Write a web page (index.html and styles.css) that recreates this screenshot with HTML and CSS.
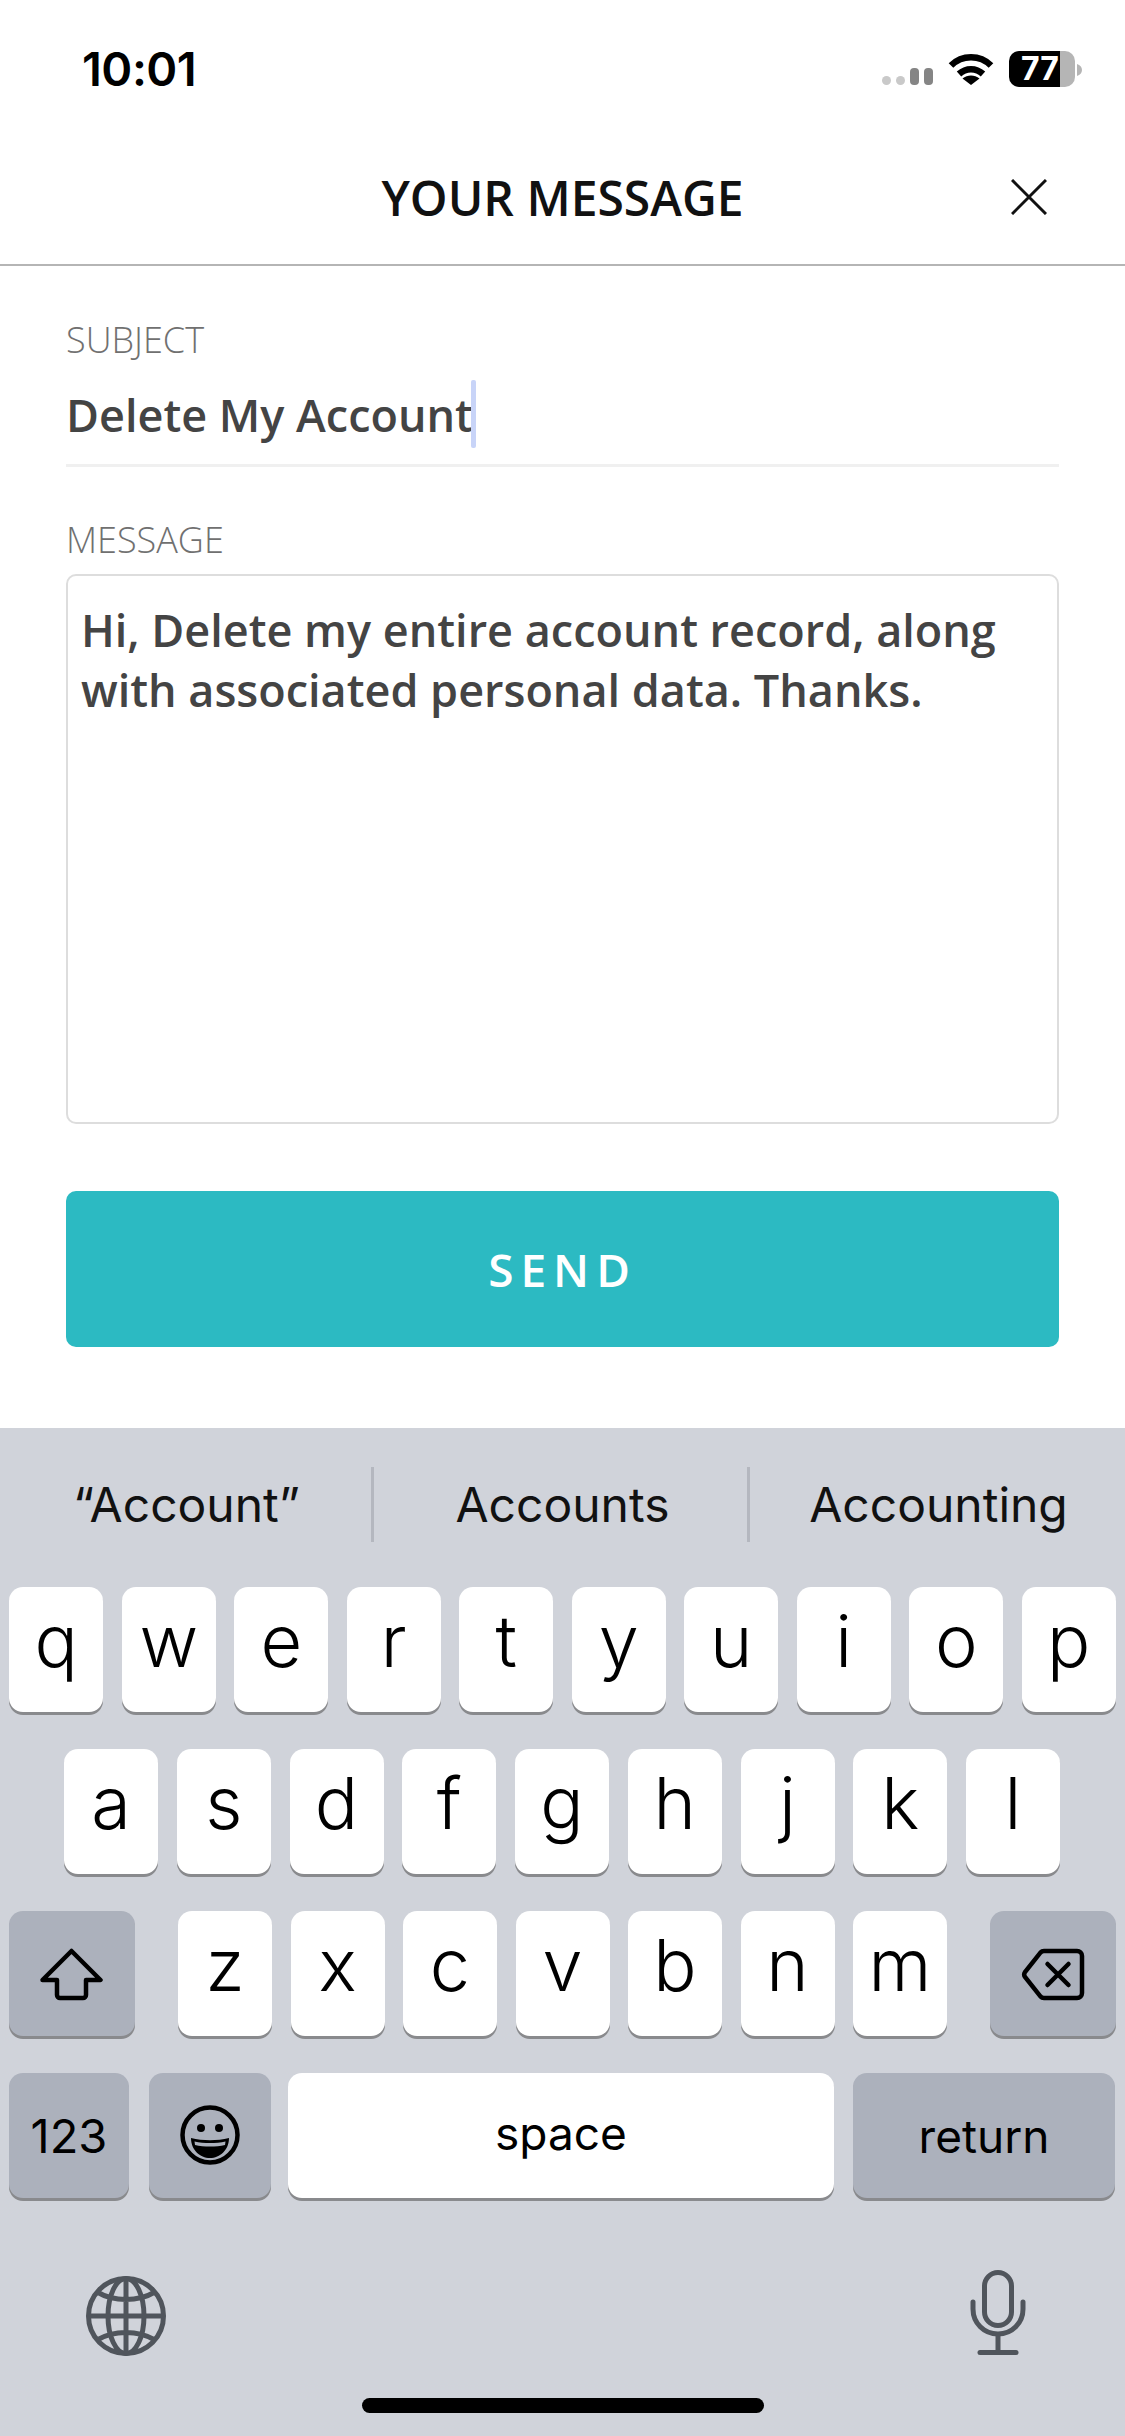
FILE: index.html
```html
<!DOCTYPE html>
<html lang="en">
<head>
<meta charset="utf-8">
<title>Your Message</title>
<link rel="stylesheet" href="styles.css">
</head>
<body>
<div class="page">
  <div class="status">
    <span class="time">10:01</span>
    <div class="status-icons">
      <svg class="signal" viewBox="0 0 51 36"><rect x="0" y="25" width="9" height="9" rx="4.5" fill="#c9c9c9"/><rect x="14" y="25" width="9" height="9" rx="4.5" fill="#c9c9c9"/><rect x="28" y="17" width="9" height="17" rx="4" fill="#858585"/><rect x="42" y="17" width="9" height="17" rx="4" fill="#858585"/></svg>
      <svg class="wifi" viewBox="0 0 46 36"><path d="M3 14.5C14 3.5 32 3.5 43 14.5" fill="none" stroke="#000" stroke-width="6.5"/><path d="M11 23C18 16.5 28 16.5 35 23" fill="none" stroke="#000" stroke-width="6.5"/><path d="M23 34L14.5 27.5C19.5 23.5 26.5 23.5 31.5 27.5Z" fill="#000"/></svg>
      <div class="battery"><span class="battery-num">77</span></div>
      <svg class="nub" viewBox="0 0 5 12"><path d="M0 0C3 1 5 3 5 6S3 11 0 12Z" fill="#b5b5b5"/></svg>
    </div>
  </div>

  <header class="header">
    <span></span>
    <h1 class="title">YOUR MESSAGE</h1>
    <svg class="close" viewBox="0 0 36 36"><path d="M1 1L35 35M35 1L1 35" fill="none" stroke="#111" stroke-width="3"/></svg>
  </header>

  <main class="form">
    <div class="label">SUBJECT</div>
    <div class="input"><span>Delete My Account</span><i class="caret"></i></div>
    <div class="underline"></div>
    <div class="label label-message">MESSAGE</div>
    <div class="textarea">Hi, Delete my entire account record, along with associated personal data. Thanks.</div>
    <div class="send">SEND</div>
  </main>

  <section class="keyboard">
    <div class="suggestions">
      <div class="sugg">“Account”</div>
      <i class="sugg-div"></i>
      <div class="sugg">Accounts</div>
      <i class="sugg-div"></i>
      <div class="sugg">Accounting</div>
    </div>
    <div class="row">
      <div class="key">q</div><div class="key">w</div><div class="key">e</div><div class="key">r</div><div class="key">t</div><div class="key">y</div><div class="key">u</div><div class="key">i</div><div class="key">o</div><div class="key">p</div>
    </div>
    <div class="row row-home">
      <div class="key">a</div><div class="key">s</div><div class="key">d</div><div class="key">f</div><div class="key">g</div><div class="key">h</div><div class="key">j</div><div class="key">k</div><div class="key">l</div>
    </div>
    <div class="row row-split">
      <div class="key fn wide"><svg class="shift" viewBox="0 0 63 53"><path d="M31.5 3L60.5 32H46V47a3 3 0 0 1-3 3H20a3 3 0 0 1-3-3V32H2.5Z" fill="none" stroke="#000" stroke-width="4.5" stroke-linejoin="round"/></svg></div>
      <div class="letters">
        <div class="key">z</div><div class="key">x</div><div class="key">c</div><div class="key">v</div><div class="key">b</div><div class="key">n</div><div class="key">m</div>
      </div>
      <div class="key fn wide"><svg class="del" viewBox="0 0 64 53"><path d="M23 3H56a5 5 0 0 1 5 5V45a5 5 0 0 1-5 5H23a5 5 0 0 1-3.6-1.6L4 29a4.5 4.5 0 0 1 0-5L19.4 4.6A5 5 0 0 1 23 3Z" fill="none" stroke="#000" stroke-width="4.5"/><path d="M26.5 16L47.5 37M47.5 16L26.5 37" fill="none" stroke="#000" stroke-width="4.5" stroke-linecap="round"/></svg></div>
    </div>
    <div class="row row-bottom">
      <div class="key fn k123 small">123</div>
      <div class="key fn kemoji"><svg class="emoji" viewBox="0 0 60 60"><circle cx="30" cy="30" r="27.5" fill="none" stroke="#000" stroke-width="4.5"/><circle cx="21" cy="23" r="4" fill="#000"/><circle cx="39" cy="23" r="4" fill="#000"/><path d="M11 33C23 36 37 36 49 33C49 45 40 53 30 53S11 45 11 33Z" fill="#000"/><path d="M14.5 36.5C24 38.5 36 38.5 45.5 36.5L45 40C36 42 24 42 15 40Z" fill="#acb1bc"/></svg></div>
      <div class="key kspace small">space</div>
      <div class="key fn kreturn small">return</div>
    </div>
    <div class="sys-row">
      <svg class="globe" viewBox="0 0 80 80"><g fill="none" stroke="#50555c" stroke-width="5"><circle cx="40" cy="40" r="37.5"/><ellipse cx="40" cy="40" rx="18" ry="37.5"/><path d="M40 2.5V77.5M2.5 40H77.5M11 16C28 26 52 26 69 16M11 64C28 54 52 54 69 64"/></g></svg>
      <svg class="mic" viewBox="0 0 56 85"><g fill="none" stroke="#50555c" stroke-width="5"><rect x="14.5" y="2.5" width="27" height="53" rx="13.5"/><path d="M3 32V39C3 53 14 64 28 64S53 53 53 39V32" stroke-linecap="round"/><path d="M28 64V81"/><path d="M10 82.5H46" stroke-linecap="round"/></g></svg>
    </div>
    <div class="home"></div>
  </section>
</div>
</body>
</html>
```
FILE: styles.css
```css
* { box-sizing: border-box; }
html, body { margin: 0; padding: 0; background: #fff; }
.page { width: 1125px; height: 2436px; display: flex; flex-direction: column; overflow: hidden; }

.status { height: 131px; padding: 49px 43px 0 82px; display: flex; align-items: flex-start; }
.time { font: 600 47px/40px Inter, sans-serif; color: #000; letter-spacing: -0.5px; }
.status-icons { margin: 2px 0 0 auto; display: flex; align-items: flex-start; }
.signal { width: 51px; height: 36px; margin-right: 15px; }
.wifi { width: 46px; height: 36px; margin-right: 15px; }
.battery { width: 66px; height: 36px; border-radius: 10px; background: linear-gradient(90deg, #000 0, #000 77%, #b5b5b5 77%); padding-left: 12px; }
.battery-num { display: block; font: 700 32px/36px Inter, sans-serif; color: #fff; white-space: nowrap; }
.nub { width: 5px; height: 12px; margin: 13px 0 0 2px; }

.header { height: 135px; border-bottom: 2px solid #b5b5b5; display: grid; grid-template-columns: 1fr auto 1fr; align-items: center; padding: 0 78px; }
.title { margin: 0; font: 600 48px/60px "Open Sans", sans-serif; color: #111; white-space: nowrap; }
.close { width: 36px; height: 36px; justify-self: end; margin-bottom: 2px; }

.form { padding: 54px 66px 0; font-family: "Open Sans", sans-serif; height: 1162px; }
.label { font-weight: 350; font-size: 36px; line-height: 40px; color: #707070; }
.label-message { margin-top: 53px; }
.input { margin-top: 20px; height: 68px; display: flex; align-items: center; font-weight: 560; font-size: 45px; line-height: 69px; color: #444; }
.caret { width: 5px; height: 68px; background: #c8d4f8; border-radius: 2px; margin-left: -2px; }
.underline { margin-top: 16px; height: 3px; background: #f0f0f0; }
.textarea { margin-top: 14px; height: 550px; border: 2px solid #ddd; border-radius: 10px; padding: 24px 13px; font-weight: 560; font-size: 45px; line-height: 60px; color: #444; }
.send { margin-top: 67px; height: 156px; border-radius: 10px; background: #2cbac2; color: #fff; display: flex; align-items: center; justify-content: center; font-weight: 600; font-size: 46px; letter-spacing: 7px; }

.keyboard { flex: 1; background: #d0d3da; font-family: Inter, sans-serif; color: #000; }
.suggestions { height: 159px; padding: 39px 0 45px; display: flex; align-items: center; }
.sugg { flex: 1; text-align: center; font-size: 48px; line-height: 75px; color: #111; }
.sugg-div { width: 3px; height: 75px; background: #b4b7bf; margin: 0 2px 0 -2px; }

.row { height: 125px; margin-bottom: 37px; display: flex; justify-content: center; gap: 18.5px; }
.row-home { padding-right: 1px; gap: 18.75px; }
.key { width: 94px; height: 125px; flex: none; border-radius: 14px; background: #fff; box-shadow: 0 3px 0 #898a8d; display: flex; align-items: center; justify-content: center; font-size: 72px; font-weight: 350; line-height: 1; padding-bottom: 18px; }
.fn { background: #acb1bc; }
.wide { width: 126px; padding-bottom: 0; }
.row-split { justify-content: space-between; padding: 0 9px; gap: 0; }
.letters { display: flex; gap: 18.5px; }
.row-bottom { justify-content: flex-start; padding-left: 9px; gap: 0; margin-bottom: 0; }
.small { font-size: 46px; font-weight: 400; padding-bottom: 0; }
.k123 { width: 120px; font-size: 47px; }
.kemoji { width: 122px; margin-left: 20px; padding-bottom: 2px; }
.kspace { width: 546px; margin-left: 17px; padding-bottom: 6px; }
.kreturn { width: 262px; margin-left: 19px; }
.shift { width: 63px; height: 53px; margin: 2px 2px 0 0; }
.del { width: 64px; height: 53px; margin-top: 2px; }
.emoji { width: 60px; height: 60px; }

.sys-row { margin-top: 72px; height: 85px; padding: 0 99px 0 86px; display: flex; justify-content: space-between; align-items: center; }
.globe { width: 80px; height: 80px; margin-top: 6px; }
.mic { width: 56px; height: 85px; }
.home { width: 402px; height: 15px; margin: 43px auto 0; border-radius: 8px; background: #000; }
```
